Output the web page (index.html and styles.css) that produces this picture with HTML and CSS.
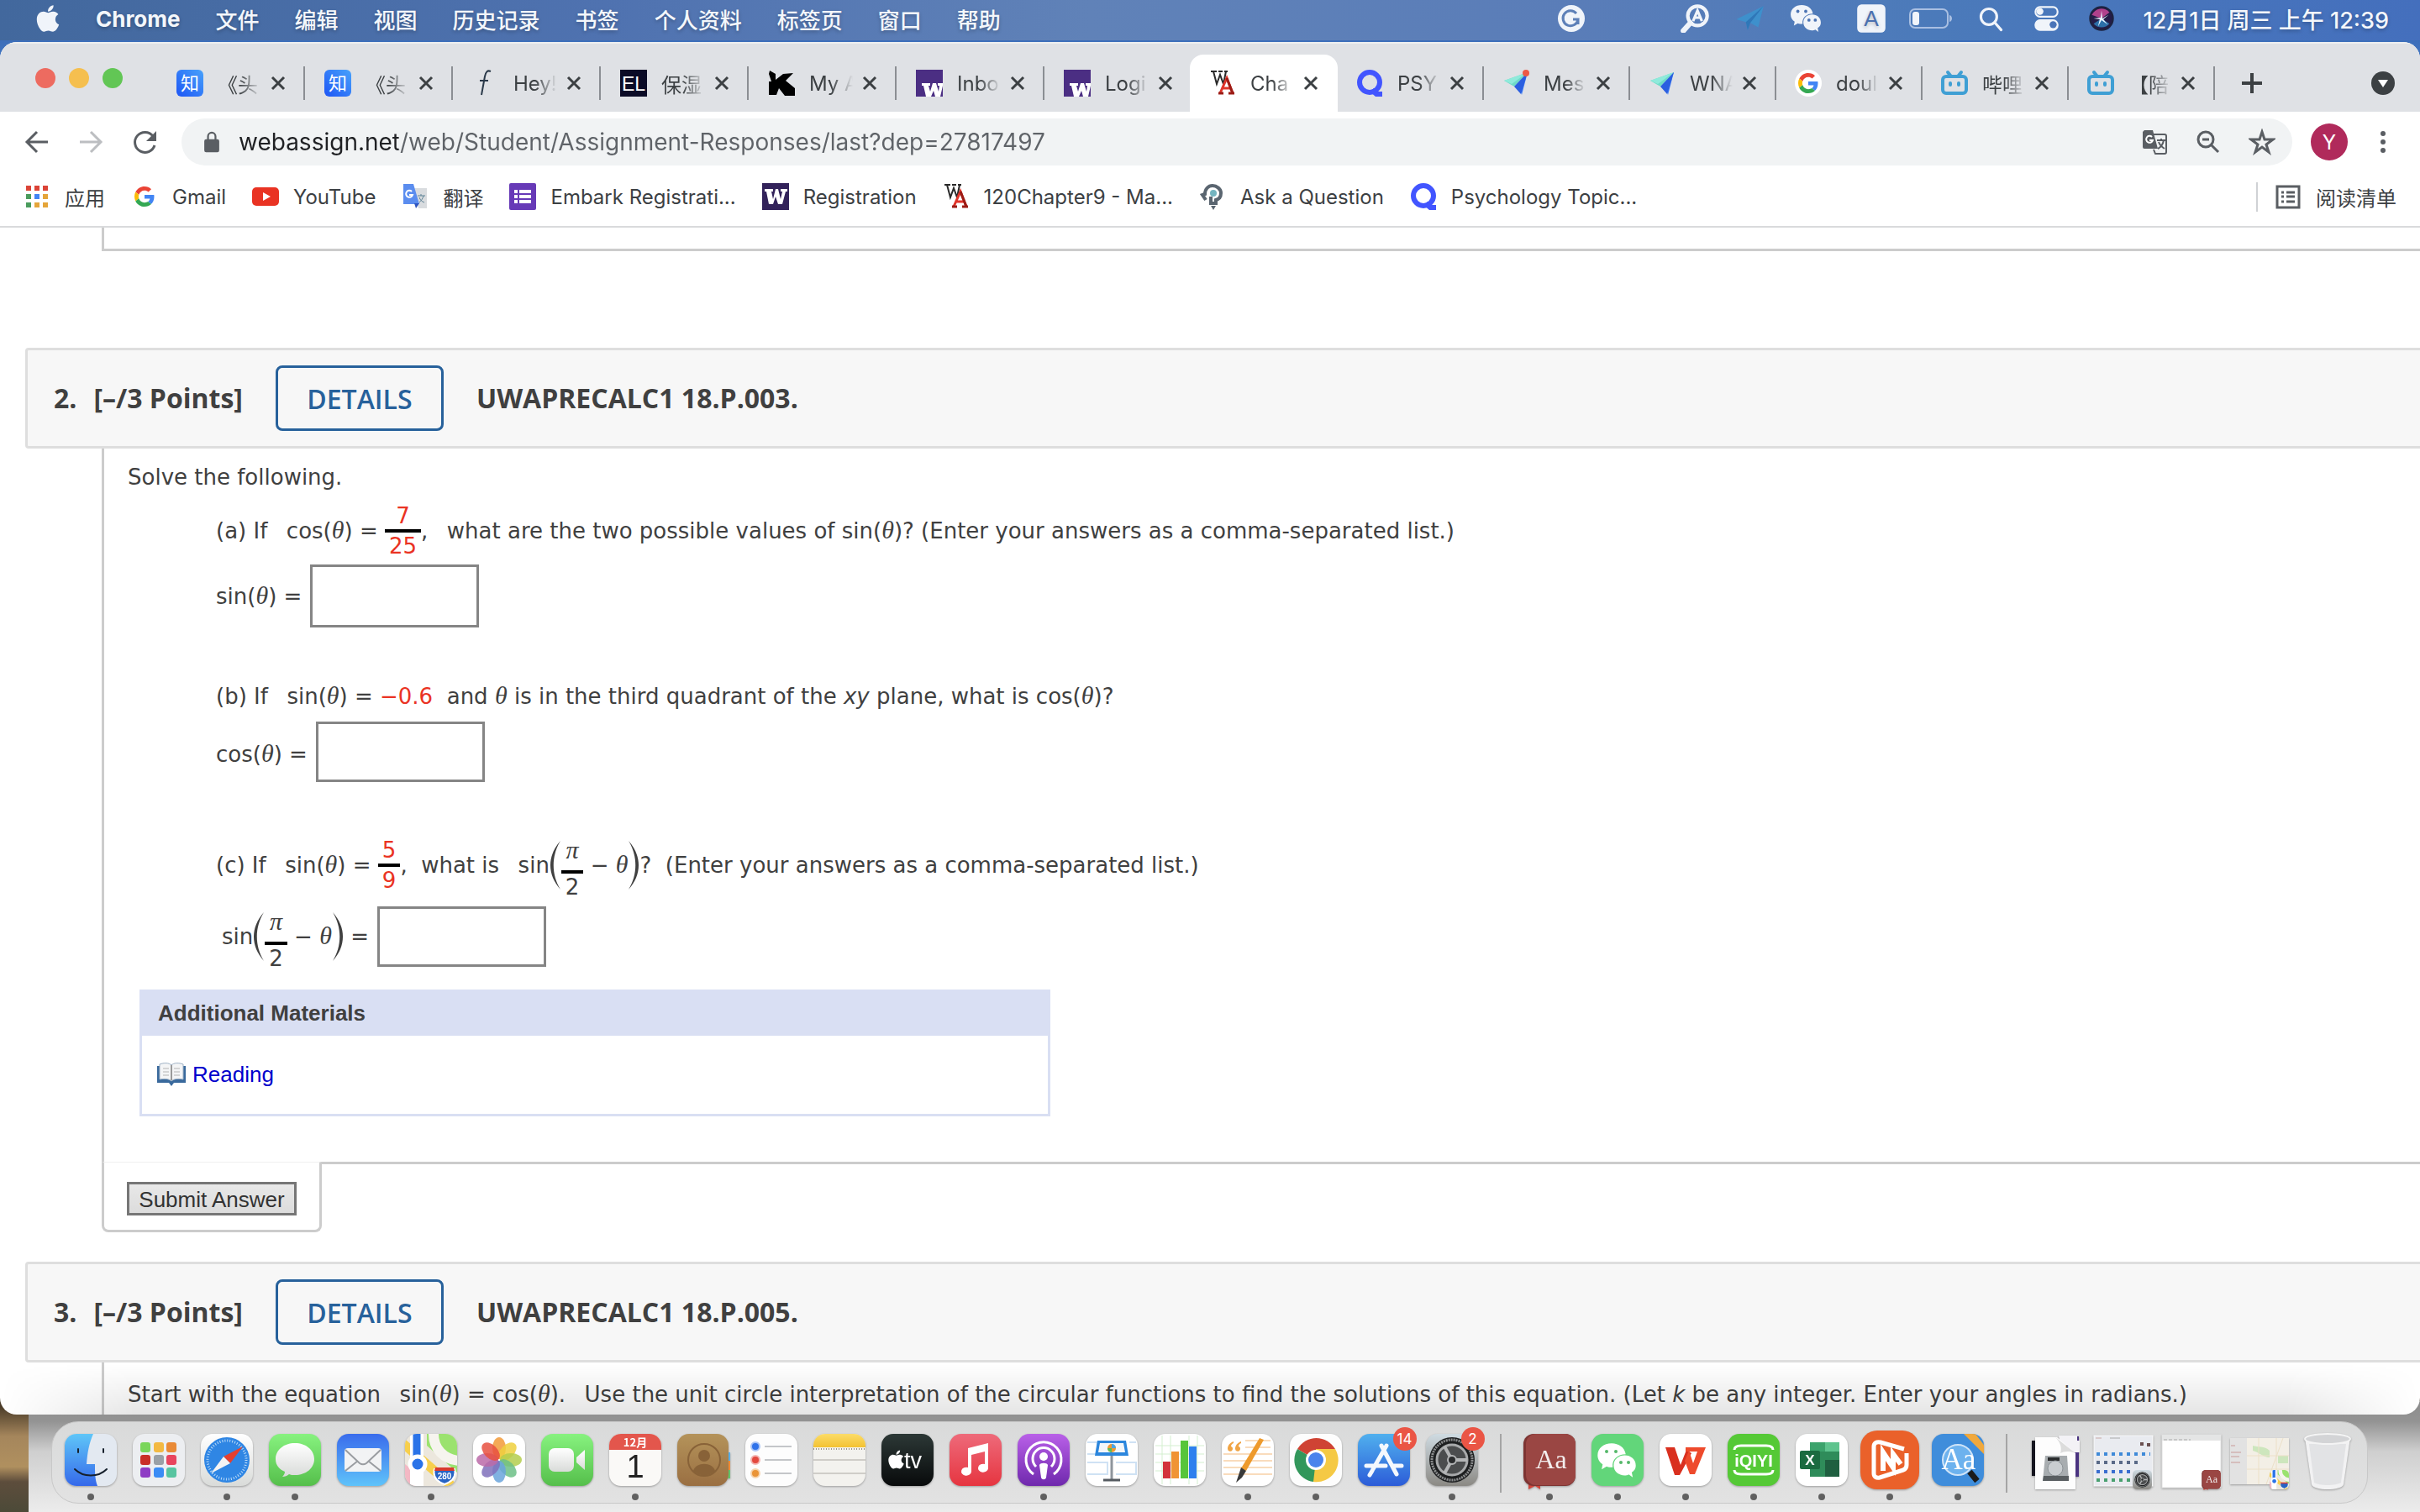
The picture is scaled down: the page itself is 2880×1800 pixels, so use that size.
FILE: index.html
```html
<!DOCTYPE html>
<html lang="zh-CN">
<head>
    <meta charset="UTF-8">
    <meta name="viewport" content="width=device-width, initial-scale=1.0">
    <title>Chapter 18 - WebAssign</title>
    <link rel="stylesheet" href="styles.css">
</head>
<body>
    <svg class="defs" aria-hidden="true">
        <defs>
            <linearGradient id="g-green" x1="0" y1="0" x2="0" y2="1"><stop offset="0" stop-color="#87f27f"/><stop offset="1" stop-color="#55bf4b"/></linearGradient>
            <linearGradient id="g-blue" x1="0" y1="0" x2="0" y2="1"><stop offset="0" stop-color="#3a6cec"/><stop offset="1" stop-color="#5fc3fa"/></linearGradient>
            <linearGradient id="g-finder" x1="0" y1="0" x2="0" y2="1"><stop offset="0" stop-color="#5fc6f8"/><stop offset="1" stop-color="#3569ea"/></linearGradient>
            <linearGradient id="g-store" x1="0" y1="0" x2="0" y2="1"><stop offset="0" stop-color="#50b0ee"/><stop offset="1" stop-color="#2c5cd8"/></linearGradient>
            <linearGradient id="g-red" x1="0" y1="0" x2="0" y2="1"><stop offset="0" stop-color="#ee6a7a"/><stop offset="1" stop-color="#e63540"/></linearGradient>
            <linearGradient id="g-purple" x1="0" y1="0" x2="0" y2="1"><stop offset="0" stop-color="#b960e8"/><stop offset="1" stop-color="#6f29ad"/></linearGradient>
            <linearGradient id="g-dark" x1="0" y1="0" x2="0" y2="1"><stop offset="0" stop-color="#2c3836"/><stop offset="1" stop-color="#080a0b"/></linearGradient>
            <linearGradient id="g-brown" x1="0" y1="0" x2="0" y2="1"><stop offset="0" stop-color="#b4935a"/><stop offset="1" stop-color="#9a6f42"/></linearGradient>
            <linearGradient id="g-white" x1="0" y1="0" x2="0" y2="1"><stop offset="0" stop-color="#ffffff"/><stop offset="1" stop-color="#d9dbd9"/></linearGradient>
            <linearGradient id="g-gray" x1="0" y1="0" x2="0" y2="1"><stop offset="0" stop-color="#cfdbe2"/><stop offset="1" stop-color="#8b8984"/></linearGradient>
            <linearGradient id="g-yellow" x1="0" y1="0" x2="0" y2="1"><stop offset="0" stop-color="#fbdc68"/><stop offset="1" stop-color="#f3c232"/></linearGradient>
            <linearGradient id="g-zhi" x1="1" y1="0" x2="0" y2="1"><stop offset="0" stop-color="#48a2fb"/><stop offset="1" stop-color="#1d55f5"/></linearGradient>
            <clipPath id="app-clip"><rect width="62" height="62" rx="14"/></clipPath>
        </defs>
    </svg>
    <svg class="sprite" aria-hidden="true">
        <symbol id="i-apple" viewBox="0 0 384 512"><path d="M318.7 268.7c-.2-36.7 16.4-64.4 50-84.8-18.8-26.9-47.2-41.7-84.7-44.6-35.5-2.8-74.3 20.7-88.5 20.7-15 0-49.4-19.7-76.4-19.7C63.3 141.2 4 184.8 4 273.5q0 39.3 14.4 81.2c12.8 36.7 59 126.7 107.2 125.2 25.2-.6 43-17.9 75.8-17.9 31.8 0 48.3 17.9 76.4 17.9 48.6-.7 90.4-82.5 102.6-119.3-65.2-30.7-61.7-90-61.7-91.9zm-56.6-164.2c27.3-32.4 24.8-61.9 24-72.5-24.1 1.4-52 16.4-67.9 34.9-17.5 19.8-27.8 44.3-25.6 71.9 26.1 2 49.9-11.4 69.5-34.3z"/></symbol>
        <symbol id="i-google" viewBox="0 0 48 48">
            <path fill="#EA4335" d="M24 9.5c3.54 0 6.71 1.22 9.21 3.6l6.85-6.85C35.9 2.38 30.47 0 24 0 14.62 0 6.51 5.38 2.56 13.22l7.98 6.19C12.43 13.72 17.74 9.5 24 9.5z"/>
            <path fill="#4285F4" d="M46.98 24.55c0-1.57-.15-3.09-.38-4.55H24v9.02h12.94c-.58 2.96-2.26 5.48-4.78 7.18l7.73 6c4.51-4.18 7.09-10.36 7.09-17.65z"/>
            <path fill="#FBBC05" d="M10.53 28.59c-.48-1.45-.76-2.99-.76-4.59s.27-3.14.76-4.59l-7.98-6.19C.92 16.46 0 20.12 0 24c0 3.88.92 7.54 2.56 10.78l7.97-6.19z"/>
            <path fill="#34A853" d="M24 48c6.48 0 11.93-2.13 15.89-5.81l-7.73-6c-2.15 1.45-4.92 2.3-8.16 2.3-6.26 0-11.57-4.22-13.47-9.91l-7.98 6.19C6.51 42.62 14.62 48 24 48z"/>
        </symbol>
        <symbol id="i-zhi" viewBox="0 0 32 32"><rect width="32" height="32" rx="6" fill="url(#g-zhi)"/><text x="16" y="24" text-anchor="middle" class="t-cjk" font-size="22" fill="#fff">知</text></symbol>
        <symbol id="i-wa" viewBox="0 0 32 32"><path d="M2 2h7M5 2l4 15 4-11 4 11 3-15M11 2h5M18 2h4" fill="none" stroke="#2a2a2a" stroke-width="2"/><path d="M13 28l8-18 7 18M16 22h9" fill="none" stroke="#e0342a" stroke-width="3"/><path d="M21 10l7 18M11 28h6M23 28h7" stroke="#9c1c16" stroke-width="3"/></symbol>
        <symbol id="i-uw" viewBox="0 0 32 32"><rect width="32" height="32" fill="#4b2e83"/><path d="M7 16h10v3h-2l2 7 3-10h4l3 10 1-7h-2v-3h6v3l-3 13h-6l-2-7-3 7h-6l-3-13H7z" fill="#fff"/></symbol>
        <symbol id="i-q" viewBox="0 0 32 32"><circle cx="16" cy="15" r="12" fill="none" stroke="#4255ff" stroke-width="6"/><path d="M16 26l5-4 4 4h6v6h-8z" fill="#4255ff"/></symbol>
        <symbol id="i-bili" viewBox="0 0 32 32" fill="none" stroke="#3f9fd4" stroke-width="4" stroke-linecap="round"><rect x="2" y="8" width="28" height="20" rx="4"/><path d="M8 3l4 5M24 3l-4 5M11 16v2M21 16v2"/></symbol>
        <symbol id="i-plane" viewBox="0 0 32 32"><path d="M2 13L30 3 14 20z" fill="#6fdcc8"/><path d="M2 13L30 3 11 17z" fill="#8feadb"/><path d="M30 3L23 30l-4-13z" fill="#3f7df5"/><path d="M30 3L14 20l8 9z" fill="#2b5fe0"/></symbol>
        <symbol id="i-x" viewBox="0 0 20 20"><path d="M3 3l14 14M17 3L3 17" stroke="#3c4043" stroke-width="3" fill="none"/></symbol>
        <symbol id="i-wechat" viewBox="0 0 40 36"><path d="M15 1C7 1 1 6 1 13c0 4 2 7 5 9l-1 5 5-3c2 1 4 1 6 1-1-8 5-13 13-13C28 5 22 1 15 1z"/><path d="M28 13c-6 0-11 4-11 10s5 10 11 10c1 0 3 0 4-1l4 3-1-5c3-2 4-4 4-7 0-6-5-10-11-10z"/></symbol>
        <symbol id="i-wheel" viewBox="0 0 62 62"><circle cx="31" cy="31" r="27" fill="#1d1f20"/><circle cx="31" cy="31" r="24" fill="none" stroke="#8b8d8e" stroke-width="3" stroke-dasharray="2 1"/><circle cx="31" cy="31" r="18" fill="#4b4d4e" stroke="#a8aaab" stroke-width="3"/><path d="M31 31h18M31 31l-9-16M31 31l-9 16" stroke="#b4b6b7" stroke-width="4"/><circle cx="31" cy="31" r="5" fill="#2a2c2d" stroke="#b4b6b7" stroke-width="2"/></symbol>
        <symbol id="i-map" viewBox="0 0 62 62">
            <g clip-path="url(#app-clip)"><rect width="62" height="62" fill="#ece7dd"/><path d="M26 0h36v46L26 14z" fill="#9be26f"/><path d="M0 36l12 10v16H0z" fill="#f3b8c4"/><path d="M34 0c0 18 12 30 30 32" fill="none" stroke="#f6f4ee" stroke-width="12"/><path d="M-4 10L58 64" stroke="#f7cf4c" stroke-width="11"/><path d="M14 0v62" stroke="#fff" stroke-width="16"/><path d="M14 0v34" stroke="#2a73e8" stroke-width="9"/><circle cx="15" cy="36" r="9" fill="#2a73e8" stroke="#fff" stroke-width="5"/></g>
            <path d="M35 42h24c2 8-1 14-12 18-11-4-14-10-12-18z" fill="#2763c4" stroke="#fff" stroke-width="2"/><path d="M36 40h22l1 4H35z" fill="#d93a2e"/>
        </symbol>
        <symbol id="i-dict" viewBox="0 0 62 66"><path d="M6 56h14v10l-6-4-8 4z" fill="#d2453a"/><rect width="62" height="62" rx="12" fill="#7d3432"/><rect x="3" width="59" height="61" rx="12" fill="#9a4643"/></symbol>
    </svg>

    <div class="desktop">
        <header class="menubar">
            <nav class="menus">
                <svg class="apple"><use href="#i-apple"/></svg>
                <a href="#" class="app-name">Chrome</a>
                <a href="#">文件</a>
                <a href="#">编辑</a>
                <a href="#">视图</a>
                <a href="#">历史记录</a>
                <a href="#">书签</a>
                <a href="#">个人资料</a>
                <a href="#">标签页</a>
                <a href="#">窗口</a>
                <a href="#">帮助</a>
            </nav>
            <div class="status">
                <svg class="st-grammar" viewBox="0 0 32 32"><circle cx="16" cy="16" r="16" fill="#f0f4fa"/><path d="M22 10a9 9 0 1 0 2 7h-6M24 16v7" fill="none" stroke="#5d80b8" stroke-width="3"/></svg>
                <svg class="st-icon" viewBox="0 0 40 32"><circle cx="23" cy="13" r="11" fill="none" stroke="#f0f4fa" stroke-width="4"/><path d="M15 21l-8 9" stroke="#f0f4fa" stroke-width="6" stroke-linecap="round"/><path d="M18 19l5-12 5 12M20 15h6" fill="none" stroke="#f0f4fa" stroke-width="3"/></svg>
                <svg class="st-icon" viewBox="0 0 40 32"><path d="M4 17L35 2 29 26l-9-5-3 8-2-9z" fill="#3e90cc"/><path d="M35 2L15 20l2 9 3-8z" fill="#2f77b8"/></svg>
                <svg class="st-icon st-wechat" viewBox="0 0 40 36"><use href="#i-wechat" fill="#f0f4fa"/><g fill="#4c74b4"><circle cx="10" cy="9" r="2"/><circle cx="20" cy="9" r="2"/><circle cx="24" cy="20" r="2"/><circle cx="32" cy="20" r="2"/></g></svg>
                <svg class="st-icon" viewBox="0 0 40 32"><rect x="4" width="32" height="32" rx="5" fill="#f0f4fa"/><text x="20" y="25" text-anchor="middle" class="t-sans" font-size="25" fill="#4a70b0">A</text></svg>
                <svg class="st-battery" viewBox="0 0 52 26"><rect x="1" y="2" width="45" height="22" rx="6" fill="none" stroke="#a9bfe2" stroke-width="2"/><rect x="4" y="5" width="8" height="16" rx="3" fill="#f0f4fa"/><path d="M48 9c4 1 4 7 0 8z" fill="#a9bfe2"/></svg>
                <svg class="st-icon" viewBox="0 0 40 32"><circle cx="18" cy="14" r="9" fill="none" stroke="#f0f4fa" stroke-width="3"/><path d="M25 21l7 8" stroke="#f0f4fa" stroke-width="3" stroke-linecap="round"/></svg>
                <svg class="st-icon" viewBox="0 0 40 32"><rect x="8" y="3" width="25" height="11" rx="5" fill="none" stroke="#f0f4fa" stroke-width="2"/><circle cx="13" cy="8" r="4" fill="#f0f4fa"/><rect x="7" y="17" width="27" height="13" rx="6" fill="#f0f4fa"/><circle cx="28" cy="23" r="4" fill="#4a74b8"/></svg>
                <svg class="st-icon" viewBox="0 0 40 32"><circle cx="20" cy="16" r="13" fill="#241c48" stroke="#1d2340" stroke-width="2"/><path d="M9 12a12 12 0 0 1 20-3L20 16z" fill="#b0418c"/><path d="M11 22a12 12 0 0 0 18 0L20 16z" fill="#2c6fa8"/><path d="M20 7l1 9 7-4-6 5 5 6-7-5-4 7 2-8-7-1 8-1z" fill="#e8f4ff"/></svg>
                <span class="clock">12月1日 周三 上午 12:39</span>
            </div>
        </header>

        <main class="window">
            <div class="tabstrip">
                <div class="lights"><button aria-label="关闭" class="red"></button><button aria-label="最小化" class="yellow"></button><button aria-label="缩放" class="green"></button></div>
                <div class="tab"><svg class="fav"><use href="#i-zhi"/></svg><a href="#">《头</a><button aria-label="关闭标签页"><svg><use href="#i-x"/></svg></button></div>
                <div class="tab"><svg class="fav"><use href="#i-zhi"/></svg><a href="#">《头</a><button aria-label="关闭标签页"><svg><use href="#i-x"/></svg></button></div>
                <div class="tab"><svg class="fav" viewBox="0 0 32 32"><path d="M22 2c-4-2-6 1-7 6l-4 22M9 13h10" fill="none" stroke="#2b3a4a" stroke-width="2"/></svg><a href="#">Hey!</a><button aria-label="关闭标签页"><svg><use href="#i-x"/></svg></button></div>
                <div class="tab"><svg class="fav" viewBox="0 0 32 32"><rect width="32" height="32" fill="#0b0b26"/><text x="16" y="25" text-anchor="middle" class="t-sans" font-size="23" fill="#fff">EL</text></svg><a href="#">保湿</a><button aria-label="关闭标签页"><svg><use href="#i-x"/></svg></button></div>
                <div class="tab"><svg class="fav" viewBox="0 0 32 32"><path d="M2 1l7 4v7l9-7 12-1-9 9 11 9v9H20l-7-9-3 8H1V14h3L1 5z" fill="#000"/></svg><a href="#">My A</a><button aria-label="关闭标签页"><svg><use href="#i-x"/></svg></button></div>
                <div class="tab"><svg class="fav"><use href="#i-uw"/></svg><a href="#">Inbo</a><button aria-label="关闭标签页"><svg><use href="#i-x"/></svg></button></div>
                <div class="tab last"><svg class="fav"><use href="#i-uw"/></svg><a href="#">Logi</a><button aria-label="关闭标签页"><svg><use href="#i-x"/></svg></button></div>
                <div class="tab active"><svg class="fav"><use href="#i-wa"/></svg><a href="#">Cha</a><button aria-label="关闭标签页"><svg><use href="#i-x"/></svg></button></div>
                <div class="tab narrow"><svg class="fav"><use href="#i-q"/></svg><a href="#">PSY</a><button aria-label="关闭标签页"><svg><use href="#i-x"/></svg></button></div>
                <div class="tab narrow"><svg class="fav" viewBox="0 0 32 32"><use href="#i-plane"/><circle cx="28" cy="4" r="4" fill="#ee5a46"/></svg><a href="#">Mes</a><button aria-label="关闭标签页"><svg><use href="#i-x"/></svg></button></div>
                <div class="tab narrow"><svg class="fav"><use href="#i-plane"/></svg><a href="#">WNA</a><button aria-label="关闭标签页"><svg><use href="#i-x"/></svg></button></div>
                <div class="tab narrow"><svg class="fav" viewBox="0 0 32 32"><circle cx="16" cy="16" r="16" fill="#fff"/><use href="#i-google" x="4" y="4" width="24" height="24"/></svg><a href="#">doul</a><button aria-label="关闭标签页"><svg><use href="#i-x"/></svg></button></div>
                <div class="tab narrow"><svg class="fav"><use href="#i-bili"/></svg><a href="#">哔哩</a><button aria-label="关闭标签页"><svg><use href="#i-x"/></svg></button></div>
                <div class="tab narrow"><svg class="fav"><use href="#i-bili"/></svg><a href="#">【陪</a><button aria-label="关闭标签页"><svg><use href="#i-x"/></svg></button></div>
                <button class="new-tab" aria-label="新标签页"><svg viewBox="0 0 24 24"><path d="M12 0v24M0 12h24" stroke="#3c4043" stroke-width="4"/></svg></button>
                <button class="tab-search" aria-label="搜索标签页"><svg viewBox="0 0 28 28"><circle cx="14" cy="14" r="14" fill="#3c4043"/><path d="M8 10h12l-6 9z" fill="#fff"/></svg></button>
            </div>

            <div class="toolbar">
                <button aria-label="后退"><svg viewBox="0 0 32 32"><path d="M29 16H5M16 4L4 16l12 12" fill="none" stroke="#5a5e63" stroke-width="3"/></svg></button>
                <button aria-label="前进"><svg viewBox="0 0 32 32"><path d="M3 16h24M16 4l12 12-12 12" fill="none" stroke="#bcbec1" stroke-width="3"/></svg></button>
                <button aria-label="重新加载"><svg viewBox="0 0 32 32"><path d="M26 9a12 12 0 1 0 2 11" fill="none" stroke="#5a5e63" stroke-width="3"/><path d="M30 3v12H18z" fill="#5a5e63"/></svg></button>
                <div class="omnibox">
                    <svg class="lock" viewBox="0 0 18 24"><rect x="1" y="9" width="16" height="14" rx="2" fill="#5a5e63"/><path d="M5 10V6a4 4 0 0 1 8 0v4" fill="none" stroke="#5a5e63" stroke-width="2"/></svg>
                    <input type="text" aria-label="地址" value="webassign.net/web/Student/Assignment-Responses/last?dep=27817497">
                    <button aria-label="翻译此页"><svg viewBox="0 0 32 32"><path d="M4 2h10l6 22H4a2 2 0 0 1-2-2V4z" fill="#5a5e63"/><path d="M15 7h13a2 2 0 0 1 2 2v19a2 2 0 0 1-2 2H17l-2-5" fill="none" stroke="#5a5e63" stroke-width="2"/><path d="M13 10a4 4 0 1 0 1 4h-4" fill="none" stroke="#fff" stroke-width="2"/><path d="M19 14h10M24 12v2M27 14c-1 5-3 8-7 10M21 16c1 3 4 6 7 8" fill="none" stroke="#5a5e63" stroke-width="2"/></svg></button>
                    <button aria-label="缩放"><svg viewBox="0 0 32 32"><circle cx="13" cy="13" r="9" fill="none" stroke="#5a5e63" stroke-width="3"/><path d="M19 19l9 9M9 13h8" stroke="#5a5e63" stroke-width="3"/></svg></button>
                    <button aria-label="收藏"><svg viewBox="0 0 32 32"><path d="M16 4l3 9h10l-8 6 3 9-8-6-8 6 3-9-8-6h10z" fill="none" stroke="#5a5e63" stroke-width="3"/></svg></button>
                </div>
                <button class="avatar" aria-label="个人资料">Y</button>
                <button class="more" aria-label="更多"><svg viewBox="0 0 32 32" fill="#5a5e63"><circle cx="16" cy="6" r="3"/><circle cx="16" cy="16" r="3"/><circle cx="16" cy="26" r="3"/></svg></button>
            </div>

            <nav class="bookmarks">
                <a href="#"><svg viewBox="0 0 32 32"><path fill="#db4437" d="M3 3h6v6H3zM13 3h6v6h-6zM23 3h6v6h-6z"/><path fill="#4a9c5d" d="M3 13h6v6H3zM3 23h6v6H3z"/><path fill="#4285f4" d="M13 13h6v6h-6z"/><path fill="#e5a53a" d="M23 13h6v6h-6zM13 23h6v6h-6zM23 23h6v6h-6z"/></svg>应用</a>
                <a href="#"><svg viewBox="0 0 64 64"><use href="#i-google" x="8" y="8" width="48" height="48"/></svg>Gmail</a>
                <a href="#"><svg viewBox="0 0 32 32"><rect y="5" width="32" height="22" rx="5" fill="#e93323"/><path d="M13 11l9 5-9 5z" fill="#fff"/></svg>YouTube</a>
                <a href="#"><svg viewBox="0 0 32 32"><path d="M12 6h18v24H20z" fill="#d9dcdf"/><path d="M2 1h12l7 24H2z" fill="#5b8def"/><path d="M15 24h6l-4 6z" fill="#2f55c0"/><path d="M12 10a4 4 0 1 0 1 4H9" fill="none" stroke="#fff" stroke-width="2"/><path d="M19 15h9M23 13v2M26 15c-1 4-3 6-5 8M21 17c1 3 3 5 6 6" fill="none" stroke="#5f8396" stroke-width="1"/></svg>翻译</a>
                <a href="#"><svg viewBox="0 0 32 32"><rect width="32" height="32" rx="2" fill="#673ab7"/><path d="M6 8h4v4H6zM12 8h14v4H12zM6 14h4v4H6zM12 14h14v4H12zM6 20h4v4H6zM12 20h14v4H12z" fill="#fff"/></svg>Embark Registrati...</a>
                <a href="#"><svg viewBox="0 0 32 32"><rect width="32" height="32" fill="#32225a"/><path d="M3 7h10v3h-2l2 9 3-12h3l3 12 2-9h-2V7h8v3h-2l-4 15h-5l-3-9-3 9H8L5 10H3z" fill="#fff"/></svg>Registration</a>
                <a href="#"><svg><use href="#i-wa"/></svg>120Chapter9 - Ma...</a>
                <a href="#"><svg viewBox="0 0 32 32"><path d="M8 20L4 14l3-1c0-6 4-10 9-10s10 4 10 9c0 4-2 7-6 8v4h-6v-8" fill="none" stroke="#5a6570" stroke-width="4"/><circle cx="17" cy="12" r="4" fill="#74b4c0"/><path d="M14 27h6l-3 5z" fill="#5a6570"/></svg>Ask a Question</a>
                <a href="#"><svg><use href="#i-q"/></svg>Psychology Topic...</a>
                <a href="#" class="reading-list"><svg viewBox="0 0 32 32"><path d="M3 4h26v25H3z" fill="none" stroke="#5a5e63" stroke-width="3"/><path d="M8 11h3M14 11h10M8 16h3M14 16h10M8 22h3M14 22h10" stroke="#5a5e63" stroke-width="3"/></svg>阅读清单</a>
            </nav>

            <div class="page">
                <div class="prev-question"></div>

                <section class="question">
                    <h2 class="q-header">
                        <span>2.</span><span class="points">[–/3 Points]</span>
                        <button class="details">DETAILS</button>
                        <span>UWAPRECALC1 18.P.003.</span>
                    </h2>
                    <div class="q-body">
                        <p>Solve the following.</p>
                        <div class="part part-a">
                            <span>(a) If&nbsp; <span class="math">cos(<i class="var">θ</i>) =&nbsp;</span></span>
                            <span class="frac red-text"><span>7</span><span>25</span></span>
                            <span>,&nbsp; <span class="math">what are the two possible values of sin(<i class="var">θ</i>)? (Enter your answers as a comma-separated list.)</span></span>
                        </div>
                        <div class="part answer-a">
                            <label for="ans-a"><span>sin(<i class="var">θ</i>) =</span></label>
                            <input type="text" id="ans-a" class="tall">
                        </div>
                        <div class="part part-b">
                            <span>(b) If&nbsp; <span class="math">sin(<i class="var">θ</i>) = <span class="red-text">−0.6</span></span>&nbsp; and <i class="var">θ</i> is in the third quadrant of the <i>xy</i> plane, what is cos(<i class="var">θ</i>)?</span>
                        </div>
                        <div class="part answer-b">
                            <label for="ans-b"><span>cos(<i class="var">θ</i>) =</span></label>
                            <input type="text" id="ans-b">
                        </div>
                        <div class="part part-c">
                            <span>(c) If&nbsp; <span class="math">sin(<i class="var">θ</i>) =&nbsp;</span></span>
                            <span class="frac red-text"><span>5</span><span>9</span></span>
                            <span>,&nbsp; what is&nbsp; <span class="math">sin</span></span>
                            <svg class="paren" viewBox="0 0 14 58"><path d="M13 0C-3 18-3 40 13 58 2 40 2 18 13 0z"/></svg>
                            <span class="frac pi"><span><i class="var">π</i></span><span>2</span></span>
                            <span>&nbsp;− <i class="var">θ</i></span>
                            <svg class="paren" viewBox="0 0 14 58"><path d="M1 0C17 18 17 40 1 58 12 40 12 18 1 0z"/></svg>
                            <span>?&nbsp; (Enter your answers as a comma-separated list.)</span>
                        </div>
                        <div class="part answer-c">
                            <label for="ans-c">
                                <span>sin</span>
                                <svg class="paren" viewBox="0 0 14 58"><path d="M13 0C-3 18-3 40 13 58 2 40 2 18 13 0z"/></svg>
                                <span class="frac pi"><span><i class="var">π</i></span><span>2</span></span>
                                <span>&nbsp;− <i class="var">θ</i></span>
                                <svg class="paren" viewBox="0 0 14 58"><path d="M1 0C17 18 17 40 1 58 12 40 12 18 1 0z"/></svg>
                                <span>&nbsp;=</span>
                            </label>
                            <input type="text" id="ans-c">
                        </div>
                        <div class="materials">
                            <h3>Additional Materials</h3>
                            <a href="#"><svg viewBox="0 0 34 28"><path d="M0 4h34v20H20l-3 4-3-4H0z" fill="#39699c"/><path d="M3 2c5-2 11-2 14 1 3-3 9-3 14-1v18c-5-1-11-1-14 2-3-3-9-3-14-2z" fill="#f4f5f6" stroke="#9db0c4"/><path d="M7 7h7M7 11h7M7 15h7M20 7h7M20 11h7M20 15h7" stroke="#b4b4b4"/><path d="M17 3v18" stroke="#9a9a9a" stroke-width="2"/></svg>Reading</a>
                        </div>
                    </div>
                    <div class="q-footer">
                        <div class="submit"><button>Submit Answer</button></div>
                        <div class="rule"></div>
                    </div>
                </section>

                <section class="question">
                    <h2 class="q-header">
                        <span>3.</span><span class="points">[–/3 Points]</span>
                        <button class="details">DETAILS</button>
                        <span>UWAPRECALC1 18.P.005.</span>
                    </h2>
                    <div class="q-body">
                        <p class="start">Start with the equation&nbsp; <span class="math">sin(<i class="var">θ</i>) = cos(<i class="var">θ</i>).&nbsp; <span class="math">Use the unit circle interpretation of the circular functions to find the solutions of this equation. (Let <i>k</i> be any integer. Enter your angles in radians.)</span></span></p>
                    </div>
                </section>
            </div>
            <div class="window-shade"></div>
        </main>

        <footer class="dock-area">
            <ul class="dock">
                <li class="open"><svg viewBox="0 0 62 62"><g clip-path="url(#app-clip)"><rect width="62" height="62" fill="#e3e9f1"/><path d="M0 0h34c-5 11-7 23-8 36h10c0 10 0 18 3 26H0z" fill="url(#g-finder)"/></g><path d="M16 18v4M46 18v4M12 42c10 10 28 10 38 0" fill="none" stroke="#16202c" stroke-width="2" stroke-linecap="round"/></svg></li>
                <li><svg viewBox="0 0 62 62"><rect width="62" height="62" rx="14" fill="#eceef1"/><rect x="9" y="10" width="12" height="12" rx="3" fill="#7ad65c"/><rect x="25" y="10" width="12" height="12" rx="3" fill="#f3b942"/><rect x="40" y="10" width="12" height="12" rx="3" fill="#e98a36"/><rect x="9" y="25" width="12" height="12" rx="3" fill="#c92f28"/><rect x="25" y="25" width="12" height="12" rx="3" fill="#9aa0a6"/><rect x="40" y="25" width="12" height="12" rx="3" fill="#e8455e"/><rect x="9" y="40" width="12" height="12" rx="3" fill="#8e3cc4"/><rect x="25" y="40" width="12" height="12" rx="3" fill="#3b8cf5"/><rect x="40" y="40" width="12" height="12" rx="3" fill="#57c4a0"/></svg></li>
                <li class="open"><svg viewBox="0 0 62 62"><rect width="62" height="62" rx="14" fill="url(#g-white)"/><circle cx="31" cy="31" r="27" fill="#2f86e4"/><circle cx="31" cy="31" r="23" fill="none" stroke="#bcdcf8" stroke-width="3" stroke-dasharray="1 2"/><path d="M50 15L35 35l-8-8z" fill="#e5402f"/><path d="M12 47l15-20 8 8z" fill="#f4f4f4"/></svg></li>
                <li class="open"><svg viewBox="0 0 62 62"><rect width="62" height="62" rx="14" fill="url(#g-green)"/><path d="M31 11c13 0 23 8 23 19s-10 19-23 19c-3 0-5 0-7-1-2 2-5 3-8 3 2-2 3-4 3-6C12 42 8 37 8 30c0-11 10-19 23-19z" fill="url(#g-white)"/></svg></li>
                <li><svg viewBox="0 0 62 62"><rect width="62" height="62" rx="14" fill="url(#g-blue)"/><rect x="9" y="17" width="44" height="28" rx="4" fill="#f2f3f4"/><path d="M10 19l17 16c3 2 5 2 8 0l17-16M10 44l15-12M52 44L37 32" fill="none" stroke="#9a9da1" stroke-width="2"/></svg></li>
                <li class="open"><svg viewBox="0 0 62 62"><use href="#i-map"/><text x="47" y="54" text-anchor="middle" class="t-sans" font-size="10" font-weight="bold" fill="#fff">280</text></svg></li>
                <li><svg viewBox="0 0 62 62"><rect width="62" height="62" rx="14" fill="#fff"/><g fill-opacity=".85"><ellipse cx="31" cy="17" rx="8" ry="13" fill="#f29a38"/><ellipse cx="31" cy="17" rx="8" ry="13" fill="#efd03e" transform="rotate(45 31 31)"/><ellipse cx="31" cy="17" rx="8" ry="13" fill="#b4ce4c" transform="rotate(90 31 31)"/><ellipse cx="31" cy="17" rx="8" ry="13" fill="#6cbf86" transform="rotate(135 31 31)"/><ellipse cx="31" cy="17" rx="8" ry="13" fill="#6aa5dc" transform="rotate(180 31 31)"/><ellipse cx="31" cy="17" rx="8" ry="13" fill="#7f70bb" transform="rotate(225 31 31)"/><ellipse cx="31" cy="17" rx="8" ry="13" fill="#bb6aa8" transform="rotate(270 31 31)"/><ellipse cx="31" cy="17" rx="8" ry="13" fill="#e8503f" transform="rotate(315 31 31)"/></g></svg></li>
                <li><svg viewBox="0 0 62 62"><rect width="62" height="62" rx="14" fill="url(#g-green)"/><rect x="9" y="17" width="30" height="28" rx="7" fill="url(#g-white)"/><path d="M42 28l10-9v24l-10-9z" fill="url(#g-white)"/></svg></li>
                <li class="open"><svg viewBox="0 0 62 62"><g clip-path="url(#app-clip)"><rect width="62" height="62" fill="#faf9f7"/><rect width="62" height="19" fill="#e3564c"/></g><text x="31" y="15" text-anchor="middle" class="t-cjk" font-size="13" font-weight="bold" fill="#fff">12月</text><text x="31" y="52" text-anchor="middle" class="t-sans" font-size="38" fill="#222">1</text></svg></li>
                <li><svg viewBox="0 0 62 62"><path d="M56 22h7v10h-7z" fill="#57aee8"/><path d="M56 32h7v11h-7z" fill="#f08b36"/><path d="M56 43h7v10h-7z" fill="#62c46a"/><rect width="61" height="62" rx="14" fill="url(#g-brown)"/><circle cx="32" cy="31" r="19" fill="none" stroke="#886238" stroke-width="2"/><circle cx="32" cy="26" r="7" fill="#886238"/><path d="M19 44c3-11 23-11 26 0-7 7-19 7-26 0z" fill="#886238"/></svg></li>
                <li><svg viewBox="0 0 62 62"><rect width="62" height="62" rx="14" fill="#fdfdfd"/><path d="M23 15h32M23 31h32M23 47h32" stroke="#c4c6c9" stroke-width="2"/><g stroke-width="2"><circle cx="12" cy="15" r="5" fill="#2f73ea" stroke="#a9c4f5"/><circle cx="12" cy="31" r="5" fill="#e3493f" stroke="#f3b4b0"/><circle cx="12" cy="47" r="5" fill="#ea9437" stroke="#f6d3ac"/></g></svg></li>
                <li><svg viewBox="0 0 62 62"><g clip-path="url(#app-clip)"><rect width="62" height="62" fill="#f3f2ee"/><rect width="62" height="16" fill="url(#g-yellow)"/><path d="M0 18h62" stroke="#9d968a" stroke-width="2" stroke-dasharray="1 2"/><path d="M0 31h62M0 47h62" stroke="#cfcdc8" stroke-width="2"/></g></svg></li>
                <li><svg viewBox="0 0 62 62"><rect width="62" height="62" rx="14" fill="url(#g-dark)"/><use href="#i-apple" x="8" y="18" width="19" height="25" fill="#fff"/><text x="27" y="41" class="t-sans" font-size="27" font-weight="500" fill="#fff">tv</text></svg></li>
                <li><svg viewBox="0 0 62 62"><rect width="62" height="62" rx="14" fill="url(#g-red)"/><path d="M22 17l24-6v30a6 5 0 1 1-4-5V21l-16 4v20a6 5 0 1 1-4-5z" fill="#fff"/></svg></li>
                <li class="open"><svg viewBox="0 0 62 62"><rect width="62" height="62" rx="14" fill="url(#g-purple)"/><g fill="none" stroke="#fff" stroke-width="3"><path d="M19 48a21 21 0 1 1 24 0"/><path d="M22 39a13 13 0 1 1 18 0"/></g><circle cx="31" cy="27" r="5" fill="#fff"/><path d="M26 37c1-3 9-3 10 0l-2 15c-1 3-5 3-6 0z" fill="#fff"/></svg></li>
                <li><svg viewBox="0 0 62 62"><rect width="62" height="62" rx="14" fill="#fff"/><path d="M2 10h12v14H2M2 34h24v14H2M36 34h24v14H36M52 10h8" fill="none" stroke="#cfe2f4" stroke-width="2"/><path d="M14 8h34l3 18H11z" fill="#2b86dd"/><path d="M17 11h28l2 11H15z" fill="#f2f6fa"/><path d="M31 26v28" stroke="#8e959c" stroke-width="3"/><path d="M21 55h20" stroke="#555b61" stroke-width="3"/><circle cx="31" cy="17" r="5" fill="#ee9a33"/><path d="M31 17v-5a5 5 0 0 1 5 5z" fill="#49a6e8"/><path d="M31 17h-5a5 5 0 0 0 5 5z" fill="#5dbb56"/></svg></li>
                <li><svg viewBox="0 0 62 62"><rect width="62" height="62" rx="14" fill="#fff"/><path d="M2 14h58M2 24h58M2 34h58M2 44h58M10 2v58M20 2v58M42 2v58M52 2v58" stroke="#d3efcf"/><rect x="11" y="33" width="9" height="20" fill="#d3333a"/><rect x="21" y="21" width="9" height="32" fill="#f09434"/><rect x="32" y="8" width="9" height="45" fill="#57c53a"/><rect x="42" y="15" width="9" height="38" fill="#2d80ee"/></svg></li>
                <li class="open"><svg viewBox="0 0 62 62"><rect width="62" height="62" rx="14" fill="#fff"/><path d="M2 24h58M2 32h58M2 40h58M2 48h58M28 8h30M28 16h30" stroke="#f9dcbc" stroke-width="2"/><path d="M14 9c-5 2-7 5-7 9a3 3 0 1 0 4-3c0-2 1-3 3-4zM23 9c-5 2-7 5-7 9a3 3 0 1 0 4-3c0-2 1-3 3-4z" fill="#f0a444"/><path d="M45 5l5 2-21 37-6-3z" fill="#ee9a2c"/><path d="M23 40l6 4-5 8-7 6z" fill="#3a3a3a"/></svg></li>
                <li class="open"><svg viewBox="0 0 62 62"><rect width="62" height="62" rx="14" fill="#fdfdfd"/><path d="M31 31L9 18a26 26 0 0 1 45 0z" fill="#cf4334"/><path d="M31 31L9 18A26 26 0 0 0 28 57l9-16z" fill="#32975b"/><path d="M31 31l-3 26A26 26 0 0 0 54 18H31z" fill="#f5c944"/><circle cx="31" cy="31" r="12" fill="#fff"/><circle cx="31" cy="31" r="9" fill="#4a83ec"/></svg></li>
                <li><svg viewBox="0 0 62 62"><rect width="62" height="62" rx="14" fill="url(#g-store)"/><path d="M34 14L18 42M28 14l18 34M10 38h23M41 38h11M17 44l-3 5" fill="none" stroke="#f4f8fd" stroke-width="5" stroke-linecap="round"/></svg><span class="badge">14</span></li>
                <li class="open"><svg viewBox="0 0 62 62"><rect width="62" height="62" rx="14" fill="url(#g-gray)"/><use href="#i-wheel"/></svg><span class="badge">2</span></li>
                <li class="sep"></li>
                <li class="open"><svg viewBox="0 0 62 62"><use href="#i-dict" width="62" height="66"/><text x="33" y="41" text-anchor="middle" class="t-serif" font-size="32" fill="#f3eeee">Aa</text></svg></li>
                <li class="open"><svg viewBox="0 0 62 62"><rect width="62" height="62" rx="14" fill="#62d67a"/><use href="#i-wechat" x="6" y="10" width="48" height="43" fill="#fff"/><g fill="#55b86a"><circle cx="18" cy="21" r="2"/><circle cx="29" cy="21" r="2"/><circle cx="35" cy="34" r="2"/><circle cx="44" cy="34" r="2"/></g></svg></li>
                <li class="open"><svg viewBox="0 0 62 62"><rect width="62" height="62" rx="14" fill="#fff"/><path d="M7 16h11l7 21 7-18 6 4-14 26h-6z" fill="#d9301f"/><path d="M31 16h24L42 48h-6l-6-16 5-12 5 15 5-14H31z" fill="#ee4a2c"/></svg></li>
                <li class="open"><svg viewBox="0 0 62 62"><rect width="62" height="62" rx="14" fill="#55c936"/><path d="M8 19c0-4 3-5 8-5h30c5 0 8 1 8 5M8 43c0 4 3 5 8 5h30c5 0 8-1 8-5" fill="none" stroke="#fff" stroke-width="3"/><text x="31" y="39" text-anchor="middle" class="t-sans" font-size="20" font-weight="bold" fill="#fff">iQIYI</text></svg></li>
                <li class="open"><svg viewBox="0 0 62 62"><rect width="62" height="62" rx="14" fill="#fff"/><path d="M17 10h35v41H17z" fill="#2f8c5a"/><path d="M35 10h17v11H35z" fill="#5fc48e"/><path d="M17 10h18v11H17z" fill="#3ca36c"/><path d="M35 31h17v20H35z" fill="#1f5f40"/><rect x="5" y="20" width="24" height="22" rx="2" fill="#1b6b40"/><text x="17" y="37" text-anchor="middle" class="t-sans" font-size="17" font-weight="bold" fill="#fff">X</text></svg></li>
                <li class="open big"><svg viewBox="0 0 70 70"><rect width="70" height="70" rx="20" fill="#ea612a"/><path d="M52 22L24 14c-5-1-8 1-8 5v32c0 4 3 6 7 5l28-9c3-1 4-3 4-6V27" fill="none" stroke="#fff" stroke-width="5"/><path d="M27 48V26l12 18V28l9 12" fill="none" stroke="#fff" stroke-width="6"/></svg></li>
                <li class="open"><svg viewBox="0 0 62 62"><g clip-path="url(#app-clip)"><rect width="62" height="62" fill="#3f8ddb"/><path d="M38 0h14l12 16v10z" fill="#f0a83c"/></g><circle cx="31" cy="31" r="18" fill="#6db2ee" stroke="#cfe4f8" stroke-width="2"/><path d="M45 45l9 11" stroke="#1b1b1b" stroke-width="7"/><text x="32" y="42" text-anchor="middle" class="t-serif" font-size="35" fill="#fff">Aa</text></svg></li>
                <li class="sep"></li>
                <li class="thumb"><svg viewBox="0 0 72 66"><path d="M8 8h10v42H8z" fill="#15151f"/><path d="M50 3h14v48H50z" fill="#4a3480"/><path d="M40 2h22v6h3v14H44z" fill="#f3f2f6"/><path d="M12 4h26l22 19v43H12z" fill="#fdfdfd"/><path d="M36 4l24 19c-8-3-14-2-18 0 2-7 0-13-6-19z" fill="#dcdcdc"/><path d="M24 26h26l2 30H21z" fill="#a8adb0"/><path d="M27 28h14v4H27z" fill="#2a2c2e"/><circle cx="36" cy="41" r="9" fill="#c9cdd0" stroke="#8c9296"/><path d="M22 50h30v6H21z" fill="#5a5f62"/></svg></li>
                <li class="thumb"><svg viewBox="0 0 72 66"><rect x="1" y="2" width="70" height="60" fill="#e9ebf0" stroke="#fafafa"/><path d="M3 5h7" stroke="#c9a9a6"/><path d="M20 5h12" stroke="#aaa"/><g stroke-width="4" stroke-dasharray="4 5"><path d="M4 24h64" stroke="#3f8ad8"/><path d="M4 34h54" stroke="#5a6a88"/><path d="M4 45h40" stroke="#3a6ed0"/><path d="M4 55h40" stroke="#49a070"/></g><path d="M56 12h4M64 13h4" stroke="#6a5050" stroke-width="4"/><rect x="47" y="43" width="23" height="23" rx="5" fill="url(#g-gray)"/><use href="#i-wheel" x="48" y="44" width="21" height="21"/></svg></li>
                <li class="thumb"><svg viewBox="0 0 72 66"><rect x="1" y="1" width="70" height="63" fill="#fff" stroke="#e2e2e2"/><path d="M1 1h70v7H1z" fill="#e4e5e5"/><path d="M3 7h32" stroke="#a8a8a8" stroke-dasharray="4 2"/><use href="#i-dict" x="48" y="43" width="23" height="24"/><text x="60" y="58" text-anchor="middle" class="t-serif" font-size="12" fill="#f3eeee">Aa</text></svg></li>
                <li class="thumb"><svg viewBox="0 0 72 66"><rect x="1" y="5" width="70" height="55" fill="#f3efe6"/><path d="M1 5h20v55H1z" fill="#e2e2e2"/><path d="M2 14h5M2 22h12M2 27h10M2 34h11" stroke="#c99a98"/><path d="M28 14c6 2 14 0 20 6v8c-8 0-12-6-20-8zM58 26h12v9H58z" fill="#cde6bd"/><path d="M21 42h50M21 26h50M35 5v55M56 5v55M44 60l20-55" stroke="#ece0c8"/><use href="#i-map" x="48" y="43" width="23" height="23"/></svg></li>
                <li class="thumb"><svg viewBox="0 0 72 66"><path d="M9 4l8 56c2 8 36 8 38 0l8-56z" fill="#f2f2f3"/><path d="M14 12l6 46c6 4 26 4 32 0l6-46z" fill="#e2e3e5"/><ellipse cx="36" cy="6" rx="27" ry="6" fill="#d3d4d6" stroke="#f4f4f4" stroke-width="2"/></svg></li>
            </ul>
        </footer>
    </div>
</body>
</html>
```

FILE: styles.css
```css
* {
    box-sizing: border-box;
}
body {
    margin: 0;
    font-family: Inter, "Noto Sans CJK SC", sans-serif;
    font-size: 24px;
    color: #3c4043;
}
button {
    padding: 0;
    border: none;
    background: none;
    font-family: inherit;
    cursor: pointer;
}
a {
    color: inherit;
    text-decoration: none;
}
svg {
    display: block;
    flex: none;
}
.defs {
    position: absolute;
    width: 0;
    height: 0;
}
.sprite {
    display: none;
}
.t-sans {
    font-family: "Liberation Sans", sans-serif;
}
.t-serif {
    font-family: "Liberation Serif", serif;
}
.t-cjk {
    font-family: "Noto Sans CJK SC", sans-serif;
}

.desktop {
    display: flex;
    flex-direction: column;
    height: 100vh;
    overflow: hidden;
    background: linear-gradient(to bottom, #2f5da8 0, #4a80cc 100px, #4a80cc 60%, #4a3b28 93%, #a5865c 95%, #b0905f 97%, #5d4d3c 98%, #4c4a38 100%);
}

/* menu bar */
.menubar {
    display: flex;
    justify-content: space-between;
    align-items: center;
    height: 48px;
    margin-bottom: 2px;
    padding: 0 37px 4px 42px;
    flex: none;
    background: linear-gradient(to right, #42689d, #4f72b0 25%, #6082b8 45%, #5a7db8 65%, #4b7aba 80%, #446fbd);
    color: #f4f7fb;
    font-size: 26px;
    font-weight: 500;
    text-shadow: 0 2px 4px rgba(0, 0, 0, 0.25);
}
.menus {
    display: flex;
    align-items: center;
    gap: 42px;
}
.apple {
    width: 30px;
    height: 36px;
    fill: #f0f4fa;
}
.app-name {
    font-weight: 700;
}
.status {
    display: flex;
    align-items: center;
    gap: 24px;
}
.st-grammar {
    width: 32px;
    height: 32px;
    margin-right: 86px;
}
.st-icon {
    width: 42px;
    height: 34px;
}
.st-wechat {
    margin-right: 12px;
}
.st-battery {
    width: 52px;
    height: 28px;
}
.clock {
    margin-left: 4px;
    font-size: 27px;
}

/* browser window */
.window {
    display: flex;
    flex-direction: column;
    position: relative;
    z-index: 1;
    flex: 1;
    min-height: 0;
    overflow: hidden;
    border-radius: 20px;
    background: #fff;
}
.tabstrip {
    display: flex;
    align-items: flex-end;
    height: 83px;
    flex: none;
    padding: 0 30px 0 42px;
    background: #dfe1e5;
    border-top: 2px solid #eceef0;
}
.lights {
    display: flex;
    gap: 16px;
    align-self: center;
    width: 145px;
}
.lights button {
    width: 24px;
    height: 24px;
    border-radius: 50%;
}
.lights .red {
    background: #ed6b60;
}
.lights .yellow {
    background: #f5bf4f;
}
.lights .green {
    background: #62c655;
}
.tab {
    display: flex;
    align-items: center;
    width: 176px;
    height: 68px;
    padding: 0 22px 0 23px;
    background: linear-gradient(#8b8e93, #8b8e93) right center / 2px 40px no-repeat;
}
.tab.narrow {
    width: 174px;
    padding: 0 22px;
}
.tab.last {
    width: 173px;
    padding-right: 19px;
    background: none;
}
.tab.active {
    background: #fff;
    border-radius: 16px 16px 0 0;
}
.fav {
    width: 32px;
    height: 32px;
}
.tab a {
    flex: 1;
    margin: 0 10px 0 17px;
    overflow: hidden;
    white-space: nowrap;
    mask-image: linear-gradient(to right, #000 50%, transparent);
}
.tab button svg {
    width: 20px;
    height: 20px;
}
.new-tab, .tab-search {
    display: flex;
    align-items: center;
    height: 68px;
}
.new-tab {
    margin-left: 32px;
}
.new-tab svg {
    width: 24px;
    height: 24px;
}
.tab-search {
    margin-left: auto;
}
.tab-search svg {
    width: 28px;
    height: 28px;
}

.toolbar {
    display: flex;
    align-items: center;
    flex: none;
    gap: 32px;
    padding: 8px 28px;
}
.toolbar svg {
    width: 32px;
    height: 32px;
}
.omnibox {
    display: flex;
    flex: 1;
    align-items: center;
    gap: 32px;
    height: 56px;
    margin: 0 -10px 0 -4px;
    padding: 0 20px 0 26px;
    border-radius: 28px;
    background: #f1f3f4;
}
.omnibox .lock {
    width: 20px;
    height: 28px;
}
.omnibox input {
    flex: 1;
    margin-left: -10px;
    padding: 0;
    border: none;
    outline: none;
    font-family: Inter, sans-serif;
    font-size: 28px;
    background: linear-gradient(to right, #202124 190px, #5f6368 190px);
    background-clip: text;
    -webkit-background-clip: text;
    color: transparent;
}
.avatar {
    width: 44px;
    height: 44px;
    border-radius: 50%;
    background: #b02a5b;
    color: #fff;
    font-size: 24px;
}
.toolbar .more {
    margin-left: -6px;
}

.bookmarks {
    display: flex;
    align-items: center;
    flex: none;
    gap: 31px;
    height: 66px;
    padding: 0 28px 6px;
    border-bottom: 2px solid #d9dadc;
}
.bookmarks a {
    display: flex;
    align-items: center;
    gap: 17px;
    white-space: nowrap;
}
.bookmarks svg {
    width: 32px;
    height: 32px;
}
.bookmarks .reading-list {
    margin-left: auto;
    padding-left: 20px;
    border-left: 2px solid #d0d2d5;
}

/* assignment page */
.page {
    flex: 1;
    min-height: 0;
    overflow: hidden;
    font-family: "DejaVu Sans", Verdana, sans-serif;
    font-size: 26px;
    line-height: 32px;
    color: #404040;
}
.prev-question {
    height: 28px;
    margin: 0 0 115px 121px;
    border-left: 3px solid #ccc;
    border-bottom: 3px solid #ccc;
}
.question {
    margin-bottom: 35px;
}
.q-header {
    display: flex;
    align-items: center;
    height: 120px;
    margin: 0 0 0 30px;
    padding-left: 31px;
    border: 3px solid #dedede;
    border-right: none;
    border-radius: 4px 0 0 4px;
    background: #f7f7f7;
    font-family: "Open Sans", sans-serif;
    font-size: 32px;
    font-weight: 700;
}
.points {
    margin-left: 20px;
}
.details {
    width: 200px;
    height: 78px;
    margin: 0 39px;
    border: 3px solid #27619b;
    border-radius: 8px;
    color: #27619b;
    font-size: 32px;
    font-weight: 600;
}
.q-body {
    margin-left: 121px;
    padding: 18px 0 54px 28px;
    border-left: 3px solid #ccc;
}
.q-body p {
    margin: 0;
}
.q-body .start {
    padding-top: 4px;
    white-space: nowrap;
}
.part {
    display: flex;
    align-items: center;
    margin-left: 105px;
}
.part label {
    display: flex;
    align-items: center;
}
.part > span, .part label > span {
    white-space: pre;
}
.part input {
    width: 201px;
    height: 72px;
    margin-left: 10px;
    border: 3px solid #858585;
    font-size: 26px;
}
.part .tall {
    height: 75px;
}
.part-a {
    margin-top: 14px;
}
.answer-a {
    margin-top: 6px;
}
.part-b {
    margin-top: 66px;
}
.answer-b {
    margin-top: 14px;
}
.answer-b label {
    padding-top: 6px;
}
.part-c {
    margin-top: 56px;
}
.answer-c {
    margin-left: 112px;
}
.math {
    margin-left: 6px;
}
.var {
    font-family: "Liberation Serif", serif;
    font-size: 30px;
    line-height: 1;
}
.red-text {
    color: #ea3323;
}
.frac {
    display: flex;
    flex-direction: column;
    text-align: center;
}
.frac > span {
    padding: 0 5px;
}
.frac > span:first-child {
    border-bottom: 4px solid #000;
}
.pi {
    margin-top: 10px;
}
.pi > span:first-child {
    padding-bottom: 7px;
}
.paren {
    width: 14px;
    height: 58px;
    fill: #404040;
}
.materials {
    width: 1084px;
    margin: 21px 0 0 14px;
    border: 3px solid #d9dff3;
    font-family: "Liberation Sans", Arial, sans-serif;
}
.materials h3 {
    margin: 0;
    padding: 9px 19px 11px;
    background: #d9dff3;
    font-size: 26px;
}
.materials a {
    display: flex;
    align-items: center;
    gap: 8px;
    padding: 30px 18px 31px;
    color: #0000cc;
}
.materials svg {
    width: 34px;
    height: 28px;
}
.q-footer {
    display: flex;
    margin-left: 121px;
}
.submit {
    padding: 23px 27px 17px;
    border: 3px solid #ccc;
    border-top: 1px solid #f0f0f0;
    border-radius: 0 0 8px 8px;
}
.submit button {
    width: 202px;
    height: 40px;
    border: 3px solid #767676;
    background: linear-gradient(#e8e8e8, #dcdcdc);
    font-family: "Liberation Sans", Arial, sans-serif;
    font-size: 26px;
    line-height: 36px;
    color: #333;
    white-space: nowrap;
}
.rule {
    flex: 1;
    border-top: 3px solid #ccc;
}
.window-shade {
    position: absolute;
    right: 0;
    bottom: 0;
    left: 0;
    height: 60px;
    background: linear-gradient(to bottom, rgba(0, 0, 0, 0), rgba(0, 0, 0, 0.1));
    mask-image: linear-gradient(to right, transparent, #000 160px, #000 calc(100% - 160px), transparent);
    pointer-events: none;
}

/* dock */
.dock-area {
    display: flex;
    justify-content: center;
    flex: none;
    margin: -16px 0 0 34px;
    padding: 24px 36px 10px 0;
    background: linear-gradient(to bottom, #8c8c8c 0, #939393 24px, #cfcfcf 60px, #ececec);
}
.dock {
    display: flex;
    height: 98px;
    margin: 0;
    padding: 0 6px;
    border: 1px solid #c8c8c8;
    border-radius: 32px;
    background: linear-gradient(#d9dada, #e2e2e2);
    list-style: none;
}
.dock li {
    display: flex;
    flex-direction: column;
    align-items: center;
    position: relative;
    width: 81px;
    padding-top: 14px;
}
.dock svg {
    width: 62px;
    height: 62px;
    overflow: visible;
    filter: drop-shadow(0 1px 1px rgba(0, 0, 0, 0.3));
}
.dock .open::after {
    content: "";
    width: 8px;
    height: 8px;
    margin-top: 9px;
    border-radius: 50%;
    background: #606060;
}
.dock .big {
    padding-top: 10px;
}
.dock .big svg {
    width: 70px;
    height: 70px;
}
.dock .big::after {
    margin-top: 5px;
}
.dock .thumb svg {
    width: 72px;
    height: 66px;
}
.dock .sep {
    width: 35px;
}
.dock .sep::before {
    content: "";
    width: 2px;
    height: 70px;
    background: #a5a5a5;
}
.badge {
    position: absolute;
    top: 6px;
    right: 2px;
    width: 28px;
    height: 28px;
    border-radius: 50%;
    background: #ea5545;
    color: #fff;
    font-size: 17px;
    line-height: 28px;
    text-align: center;
}
```
